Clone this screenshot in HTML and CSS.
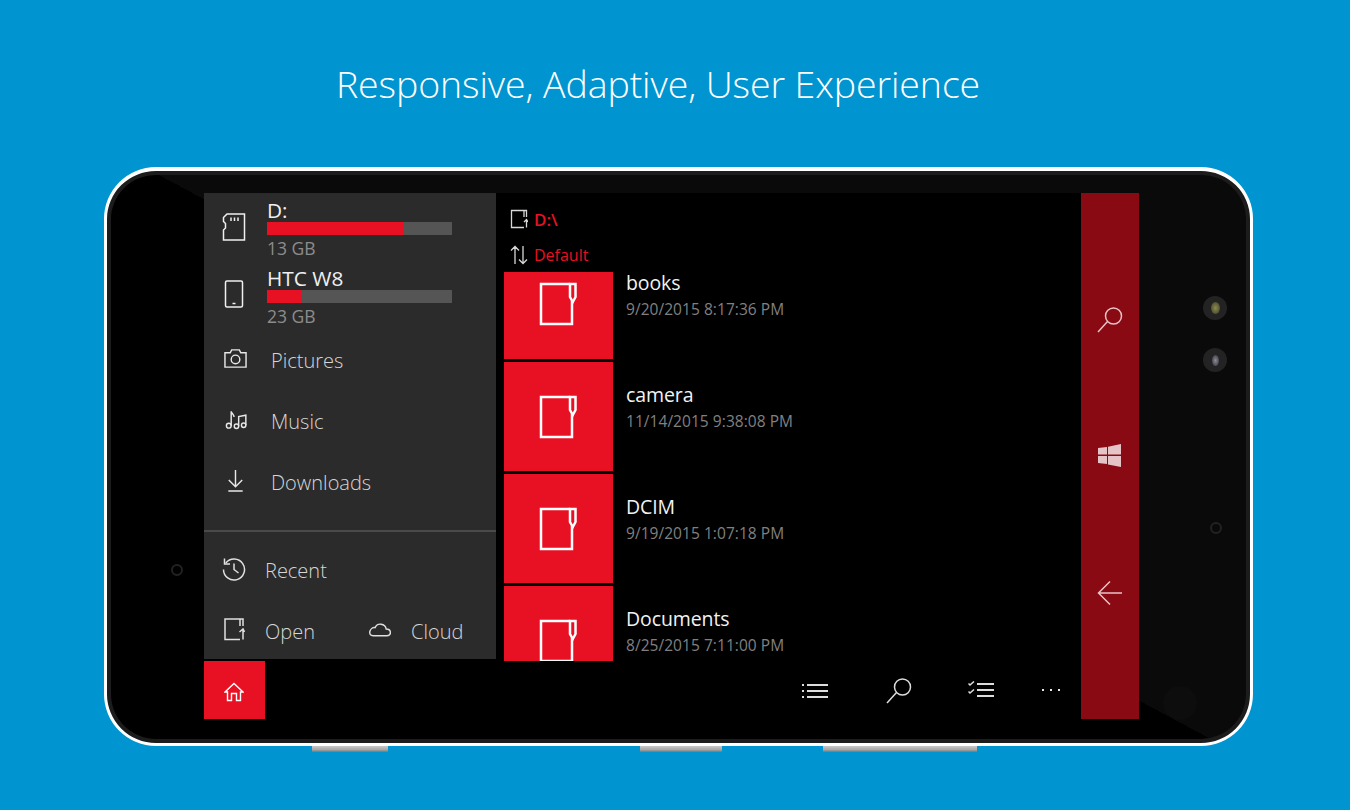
FILE: index.html
```html
<!DOCTYPE html>
<html lang="en">
<head>
<meta charset="utf-8">
<title>Responsive, Adaptive, User Experience</title>
<link rel="stylesheet" href="styles.css">
</head>
<body>
<h1 class="headline">Responsive, Adaptive, User Experience</h1>
<div class="phone">
  <span class="lens lens-a"><i></i></span>
  <span class="lens lens-b"><i></i></span>
  <span class="ring ring-right"></span>
  <span class="ring ring-left"></span>
  <span class="glow"></span>
  <span class="key key-a"></span>
  <span class="key key-b"></span>
  <span class="key key-c"></span>
  <div class="screen">
    <div class="main">
      <div class="top">
        <aside class="pane">
          <div class="drive">
            <svg class="ic-drive" viewBox="0 0 24 28"><path d="M5 1H22.500V27H1.500V17L3.500 15V10.500L1.500 8.500V4.500Z"/><path d="M9 4.500V8M12.500 4.500V8M16 4.500V8"/></svg>
            <div class="drive-info">
              <div class="drive-name">D:</div>
              <div class="bar"><div class="bar-fill" style="width:137px"></div></div>
              <div class="drive-size">13 GB</div>
            </div>
          </div>
          <div class="drive">
            <svg class="ic-drive ic-handset" viewBox="0 0 24 28"><rect x="3.500" y="1" width="17" height="26" rx="1.500"/><path d="M10.500 23.500H13.500"/></svg>
            <div class="drive-info">
              <div class="drive-name">HTC W8</div>
              <div class="bar"><div class="bar-fill" style="width:35px"></div></div>
              <div class="drive-size">23 GB</div>
            </div>
          </div>
          <div class="place">
            <svg class="ic-place" viewBox="0 0 24 20"><path d="M1 4H6.500L8 1H16L17.500 4H23V19H1Z"/><circle cx="12" cy="11" r="4.500"/></svg>
            <span>Pictures</span>
          </div>
          <div class="place">
            <svg class="ic-place" viewBox="0 0 24 20"><circle cx="5" cy="16.500" r="2.500"/><path d="M7.500 16.500V1.500C8 4 10.500 4.500 10.500 7.500"/><circle cx="13" cy="17" r="2.300"/><circle cx="20.500" cy="16" r="2.300"/><path d="M15.300 17V7L22.800 5.500V16"/></svg>
            <span>Music</span>
          </div>
          <div class="place">
            <svg class="ic-place" viewBox="0 0 24 24"><path d="M12 1V18M5 11.500L12 18.500L19 11.500M4.500 23H19.500"/></svg>
            <span>Downloads</span>
          </div>
          <div class="pane-foot">
            <div class="foot-row">
              <div class="foot-item">
                <svg class="ic-foot" viewBox="0 0 24 24"><path d="M3.800 6A10.500 10.500 0 1 1 1.500 12.500"/><path d="M2.500 1.500V7H8"/><path d="M12 6.500V12.500L16.500 16"/></svg>
                <span>Recent</span>
              </div>
            </div>
            <div class="foot-row">
              <div class="foot-item">
                <svg class="ic-open" viewBox="0 0 21 23"><path d="M16 21.500H1V1H16"/><path d="M16 1H19V8M19 21.500V12M16 1V8M15.500 14L19 11L20.500 14"/></svg>
                <span>Open</span>
              </div>
              <div class="foot-item foot-cloud">
                <svg class="ic-cloud" viewBox="0 0 24 15"><path d="M5.500 14H19.500C25 14 24.500 7 19 7C18 1 9.500 0 7.500 5.500C2 4.500 -1 14 5.500 14Z"/></svg>
                <span>Cloud</span>
              </div>
            </div>
          </div>
        </aside>
        <section class="files">
          <div class="crumb">
            <svg class="ic-crumb" viewBox="0 0 18 20"><path d="M14 18.500H1.500V1.500H14"/><path d="M14 1.500H16.500V8M16.500 18.500V11M14 1.500V8M14 13L16.500 10.500L18 13"/></svg>
            <span class="crumb-path">D:\</span>
          </div>
          <div class="crumb crumb-sort">
            <svg class="ic-crumb" viewBox="0 0 18 20"><path d="M5 19V1.500M1 5.500L5 1.500L9 5.500M13 1V18.500M9 14.500L13 18.500L17 14.500"/></svg>
            <span>Default</span>
          </div>
          <div class="list">
            <div class="row row-first">
              <div class="tile"><svg class="ic-book" viewBox="0 0 38 44"><path d="M31 2H2V42H33V19"/><path d="M31 2H36.500V15L33.800 20L31 15Z"/></svg></div>
              <div class="row-text"><div class="row-name">books</div><div class="row-date">9/20/2015 8:17:36 PM</div></div>
            </div>
            <div class="row">
              <div class="tile"><svg class="ic-book" viewBox="0 0 38 44"><path d="M31 2H2V42H33V19"/><path d="M31 2H36.500V15L33.800 20L31 15Z"/></svg></div>
              <div class="row-text"><div class="row-name">camera</div><div class="row-date">11/14/2015 9:38:08 PM</div></div>
            </div>
            <div class="row">
              <div class="tile"><svg class="ic-book" viewBox="0 0 38 44"><path d="M31 2H2V42H33V19"/><path d="M31 2H36.500V15L33.800 20L31 15Z"/></svg></div>
              <div class="row-text"><div class="row-name">DCIM</div><div class="row-date">9/19/2015 1:07:18 PM</div></div>
            </div>
            <div class="row row-last">
              <div class="tile"><svg class="ic-book" viewBox="0 0 38 44"><path d="M31 2H2V42H33V19"/><path d="M31 2H36.500V15L33.800 20L31 15Z"/></svg></div>
              <div class="row-text"><div class="row-name">Documents</div><div class="row-date">8/25/2015 7:11:00 PM</div></div>
            </div>
          </div>
        </section>
      </div>
      <div class="bottom">
        <div class="home">
          <svg class="ic-home" viewBox="0 0 20 20"><path d="M1 10L10 1.500L19 10H16.500V18.500H12.500V11.500H7.500V18.500H3.500V10Z"/></svg>
        </div>
        <div class="tools">
          <svg class="tool tool-list" viewBox="0 0 26 16"><path class="thick" d="M5 2H26M5 8H26M5 14H26"/><path class="thick" d="M0 2H2M0 8H2M0 14H2"/></svg>
          <svg class="tool tool-search" viewBox="0 0 26 26"><circle cx="16.500" cy="9" r="8"/><path d="M10.500 14.500L1 25"/></svg>
          <svg class="tool tool-check" viewBox="0 0 26 18"><path class="thick" d="M9 3H26M9 9H26M9 15H26"/><path d="M0.500 2.500L2 4L6 0.500M0.500 10.500L2 12L6 8.500"/></svg>
          <div class="tool-more">
            <i></i><i></i><i></i>
          </div>
        </div>
      </div>
    </div>
    <nav class="nav">
      <div class="nav-cell"><svg class="nav-ic nav-search" viewBox="0 0 26 26"><circle cx="16.500" cy="9" r="8"/><path d="M10.500 14.500L1 25"/></svg></div>
      <div class="nav-cell"><svg class="nav-win" viewBox="0 0 23 23"><polygon points="0,4 9,2.900 9,10.500 0,10.500"/><polygon points="10,2.700 23,0 23,10.500 10,10.500"/><polygon points="0,12 9,12 9,20.100 0,19"/><polygon points="10,12 23,12 23,23 10,20.500"/></svg></div>
      <div class="nav-cell"><svg class="nav-ic" viewBox="0 0 26 26"><path d="M25 13H2M13 1.500L1.500 13L13 24.500"/></svg></div>
    </nav>
  </div>
</div>
</body>
</html>
```
FILE: styles.css
```css
* { box-sizing: border-box; }
html, body { margin: 0; height: 100%; }
body {
  width: 1350px;
  height: 810px;
  overflow: hidden;
  background: #0095d0;
  font-family: "Open Sans", "Noto Sans", sans-serif;
  color: #fff;
}
svg { display: block; fill: none; stroke: currentColor; stroke-width: 1.5; }

.headline {
  margin: 0;
  height: 167px;
  padding-right: 34px;
  line-height: 167px;
  text-align: center;
  font-size: 37.500px;
  font-weight: 300;
  letter-spacing: -0.1px;
}

.phone {
  position: relative;
  width: 1149px;
  height: 579px;
  margin-left: 104px;
  padding: 22px 111px 22px 97px;
  border: 3px solid #fff;
  border-top-width: 4px;
  border-radius: 52px;
  background: linear-gradient(28.2deg, #000 calc(50% + 3px), #0a0a0a calc(50% + 3px));
  box-shadow: inset 0 0 0 4px #1c1c1c;
}

.lens {
  position: absolute;
  left: 1096px;
  width: 24px;
  height: 24px;
  border-radius: 50%;
  background: #232323;
  display: flex;
  align-items: center;
  justify-content: center;
}
.lens i { display: block; width: 9px; height: 12px; border-radius: 50%; }
.lens-a { top: 125px; }
.lens-a i { background: radial-gradient(#8c8a55, #3a3a20); }
.lens-b { top: 177px; }
.lens-b i { width: 7px; height: 11px; background: radial-gradient(#8a8c9c, #2c2c30); }
.ring {
  position: absolute;
  width: 12px;
  height: 12px;
  border: 2px solid #222;
  border-radius: 50%;
}
.ring-right { left: 1103px; top: 351px; }
.ring-left { left: 64px; top: 393px; }
.glow {
  position: absolute;
  left: 1056px;
  top: 515px;
  width: 34px;
  height: 34px;
  border-radius: 50%;
  background: #0d0d0d;
}
.key {
  position: absolute;
  top: 575px;
  height: 6px;
  background: linear-gradient(#c8c8c8, #a8a8a8 60%, #777);
}
.key-a { left: 205px; width: 76px; }
.key-b { left: 533px; width: 82px; }
.key-c { left: 716px; width: 154px; }

.screen {
  display: flex;
  width: 935px;
  height: 526px;
  background: #000;
}
.main { width: 877px; display: flex; flex-direction: column; }
.top { display: flex; gap: 8px; height: 468px; }

/* left pane */
.pane {
  width: 292px;
  height: 466px;
  background: #2b2b2b;
  display: flex;
  flex-direction: column;
}
.drive { display: flex; align-items: center; flex: none; height: 68px; padding-left: 18px; }
.ic-drive { width: 24px; height: 28px; color: #f0f0f0; margin-right: 21px; }
.ic-handset { margin-top: -3px; }
.drive-info { width: 185px; align-self: flex-start; padding-top: 4px; }
.drive-name { font-size: 20.800px; line-height: 26px; height: 25px; color: #f0f0f0; }
.bar { height: 13px; background: #555; }
.bar-fill { height: 100%; background: #e81123; }
.drive-size { margin-top: 3px; font-size: 17.500px; line-height: 21px; color: #8c8c8c; }
.place {
  display: flex;
  align-items: center;
  flex: none;
  height: 61px;
  padding-left: 20px;
  font-size: 20px;
  font-weight: 300;
  color: #d6d6d6;
}
.place:nth-child(3) { margin-top: 1px; }
.ic-place { width: 23px; height: 23px; color: #e8e8e8; margin: -4px 24px 0 0; }
.pane-foot { margin-top: 17px; padding-top: 10px; border-top: 2px solid #4a4a4a; flex: 1; display: flex; flex-direction: column; gap: 5px; }
.foot-row { display: flex; height: 56px; flex: none; align-items: center; padding-left: 18px; font-size: 20px; font-weight: 300; color: #d6d6d6; }
.foot-item { display: flex; align-items: center; }
.ic-foot { width: 24px; height: 24px; color: #e0e0e0; margin: -3px 19px 0 0; }
.ic-open { width: 21px; height: 23px; color: #e0e0e0; margin: -4px 20px 0 2px; }
.foot-cloud { margin-left: 53px; }
.ic-cloud { width: 23px; height: 15px; color: #e0e0e0; margin: -3px 20px 0 0; }

/* file list */
.files { width: 577px; display: flex; flex-direction: column; }
.crumb {
  display: flex;
  align-items: center;
  gap: 6px;
  height: 36px;
  margin-top: 8px;
  padding-left: 6px;
  font-size: 16px;
  color: #e81123;
}
.crumb-path { font-size: 17px; font-weight: 600; }
.crumb-sort { height: 36px; margin-top: 0; }
.ic-crumb { width: 18px; height: 20px; color: #d8d8d8; stroke-width: 1.300; }
.list { margin-top: -1px; display: flex; flex-direction: column; gap: 3px; }
.row { display: flex; height: 109px; flex: none; }
.row-first { height: 87px; }
.row-last { height: 75px; }
.tile {
  width: 109px;
  background: #e81123;
  display: flex;
  align-items: center;
  justify-content: center;
  flex: none;
  overflow: hidden;
}
.row-first .tile { align-items: flex-end; padding-bottom: 33px; }
.row-last .tile { align-items: flex-start; padding-top: 33px; }
.ic-book { width: 38px; height: 44px; flex: none; color: #fff; stroke-width: 2.500; margin-left: -2px; }
.row-text { padding: 20px 0 0 13px; }
.row-first .row-text { padding-top: 0; margin-top: -2px; }
.row-name { font-size: 19.500px; line-height: 26px; color: #f2f2f2; letter-spacing: -0.1px; }
.row-date { font-size: 15.500px; line-height: 26px; color: #808080; letter-spacing: 0.05px; }

/* bottom bar */
.bottom { display: flex; justify-content: space-between; height: 58px; }
.home {
  width: 61px;
  background: #e81123;
  display: flex;
  align-items: center;
  justify-content: center;
}
.ic-home { width: 20px; height: 20px; color: #fff; stroke-width: 1.400; margin: 3px 2px 0 0; }
.tools { display: flex; align-items: center; padding-right: 21px; color: #dcdcdc; }
.tool { flex: none; }
.thick { stroke-width: 2; }
.tool-list { width: 26px; height: 16px; margin-top: 1px; }
.tool-search { width: 26px; height: 26px; margin: 2px 0 0 58px; }
.tool-check { width: 26px; height: 18px; margin-left: 56px; }
.tool-more { display: flex; gap: 5.500px; margin-left: 48px; }
.tool-more i { width: 2.500px; height: 2.500px; background: #e8e8e8; }

/* system nav */
.nav {
  width: 58px;
  height: 526px;
  background: #8a0a14;
  display: flex;
  flex-direction: column;
  justify-content: center;
}
.nav-cell {
  height: 137px;
  flex: none;
  display: flex;
  align-items: center;
  justify-content: center;
  color: #e6c3c6;
}
.nav-ic { width: 26px; height: 26px; }
.nav-search { margin-top: 2px; }
.nav-win { width: 23px; height: 23px; fill: #e6c3c6; stroke: none; margin: -2px 0 0 -2px; }
```
